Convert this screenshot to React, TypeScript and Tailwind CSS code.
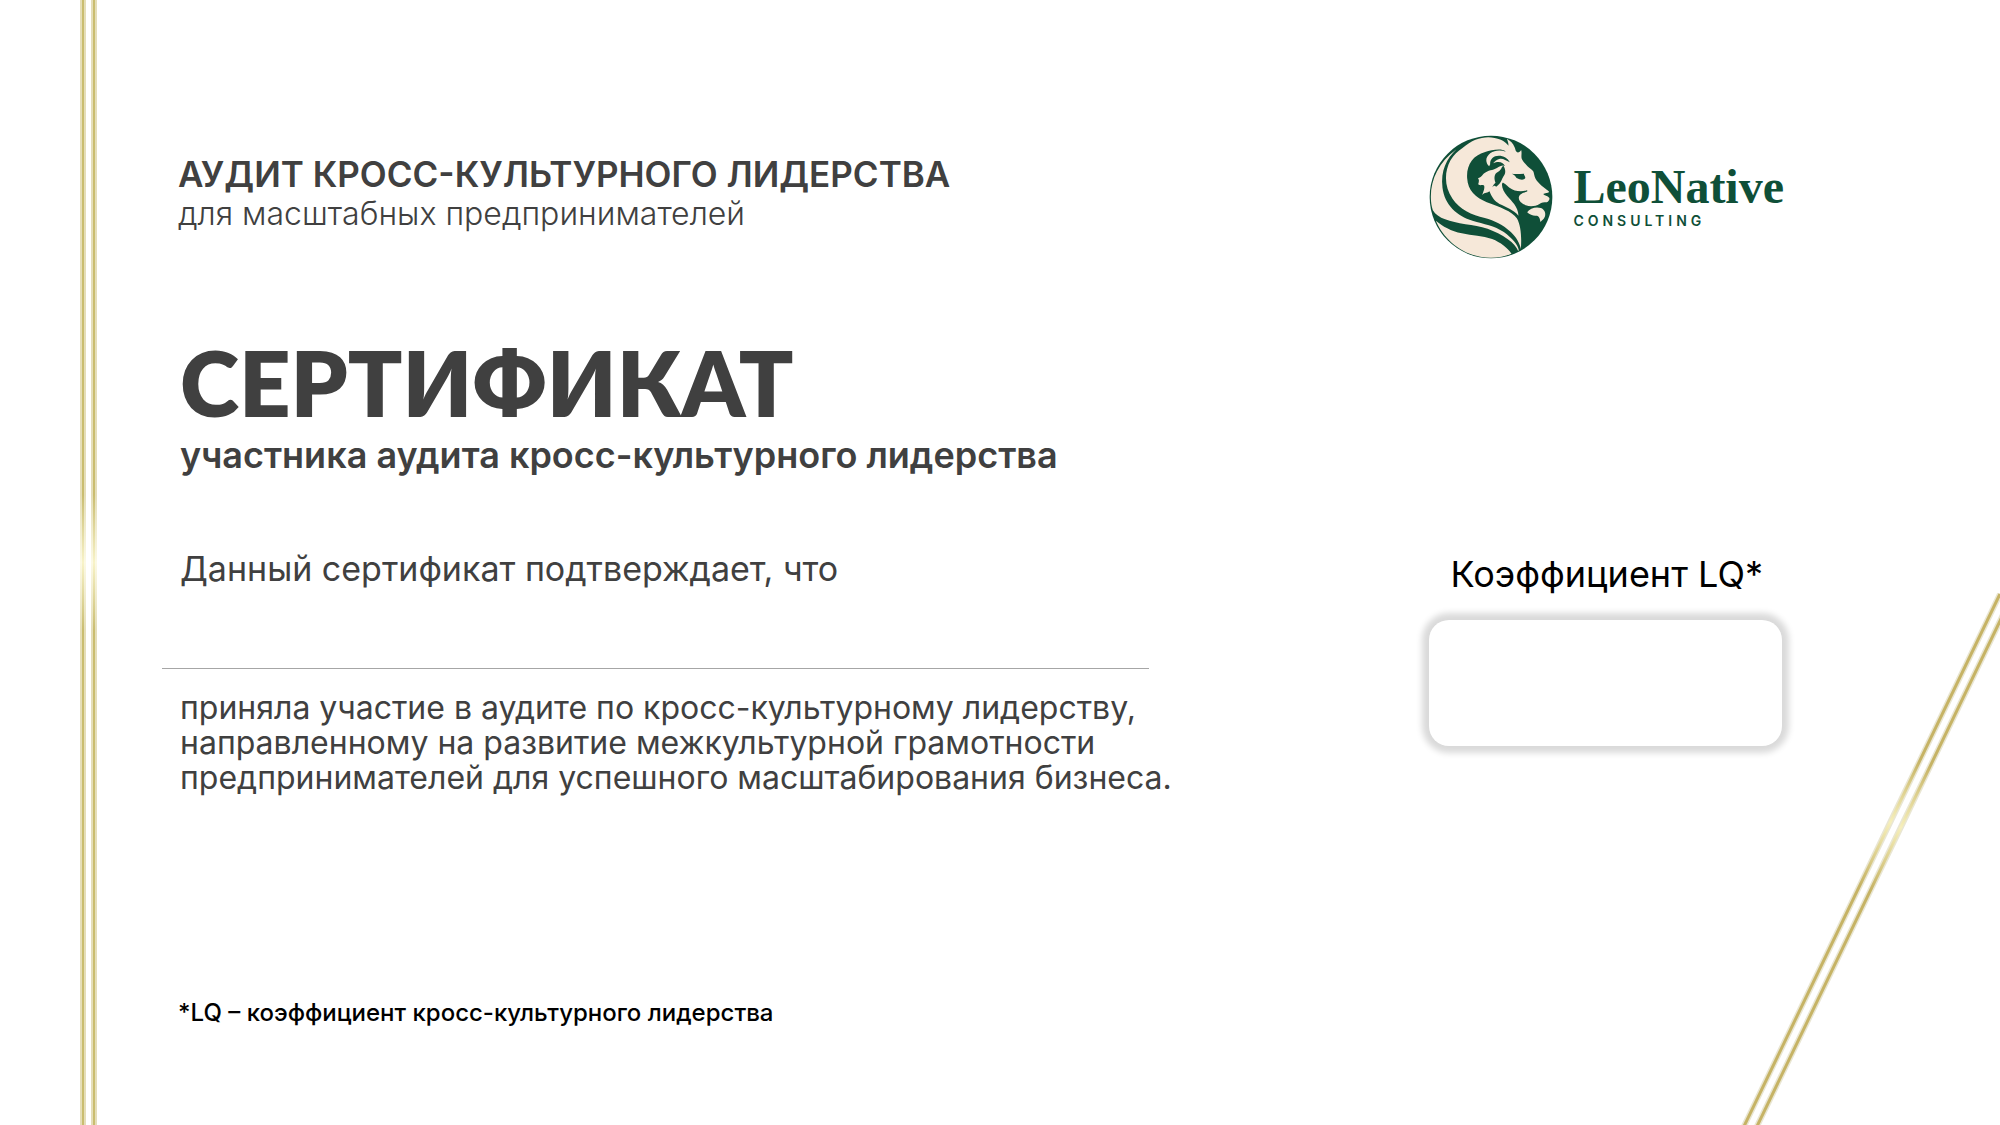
import React from "react";

function LionEmblem() {
  return (
    <svg viewBox="26 32 371 372" className="size-[124px] shrink-0" aria-hidden="true">
      <circle cx="211.5" cy="218" r="184" fill="#0f4f38" />
      <g fill="#f6e8d9">
        <path d="M108 75C55 113 31 165 31 217C31 233 33 246 37 258C52 283 88 292 135 300C180 304 225 318 262 345C278 356 288 368 293 380L295 378C292 360 275 342 250 323C222 304 190 299 156 289C110 275 72 241 66 190C60 140 78 103 108 75Z" />
        <path d="M46 289C72 349 132 400 211 400C236 400 256 396 273 388C262 371 240 354 215 344C186 335 155 334 124 327C92 320 66 306 46 289Z" />
        <path d="M126 71C165 37 205 32 241 46C252 51 258 56 264 64C264 56 262 50 259 43C270 49 278 57 282 68C286 76 284 80 290 84C295 85 299 82 302 77C305 86 301 95 304 104C308 112 315 119 321 126C328 132 335 136 339 142C341 151 343 161 349 169C357 178 366 187 375 193C380 197 385 199 386 203C382 207 373 206 368 209C371 214 382 215 386 220C389 225 384 231 379 234C370 234 363 234 357 239C346 246 329 248 316 243C304 238 294 230 295 219C297 210 306 206 316 203C321 202 322 200 319 198C300 204 281 200 267 190C257 182 252 175 246 175C241 185 249 202 260 215C274 232 292 245 294 274C279 256 256 248 237 239C223 231 214 220 207 201C201 207 194 203 185 212C189 200 193 192 191 184C186 180 179 185 173 180C177 169 175 164 172 162C184 160 185 149 196 144C207 136 222 138 234 128C240 125 248 121 253 125C250 115 235 108 218 117C222 111 228 106 236 104C247 101 255 108 268 114C262 101 249 94 235 94C218 94 208 105 209 120L206 126C193 114 195 97 210 86C221 78 241 76 256 82C242 70 213 78 194 83C156 93 137 124 140 162C142 198 165 220 199 234C238 248 274 261 289 282C301 302 304 340 301 374C298 357 287 338 271 323C247 301 222 289 193 281C154 272 117 255 96 223C72 188 70 145 90 108C100 91 112 81 126 71Z" />
        <path d="M320 264C328 252 346 246 361 251C372 255 377 267 373 277C370 285 364 287 360 293C358 281 356 276 349 274C340 276 328 271 320 264Z" />
      </g>
      <g fill="#0f4f38">
        <path d="M249 124C242 127 244 136 233 142C219 148 221 164 225 175C219 180 218 184 215 189C220 183 222 183 227 187C241 179 243 165 251 153C257 143 254 133 249 124Z" />
        <path d="M274 148C285 151 299 148 311 148C308 151 316 155 314 162C311 168 298 167 290 162C285 159 287 154 274 148Z" />
      </g>
    </svg>
  );
}

function Logo() {
  return (
    <div className="flex items-center gap-5 text-[#0f4f38]">
      <LionEmblem />
      <div>
        <p className="font-['Liberation_Serif',serif] text-[48px] leading-[48px] font-bold">LeoNative</p>
        <p className="font-[Inter,sans-serif] text-[14px] leading-5 font-semibold tracking-[4px]">CONSULTING</p>
      </div>
    </div>
  );
}

function GoldBar() {
  return (
    <div className="flex w-[6px] bg-linear-to-b from-[#cabd70] from-44% via-[#f8f3c8] via-50% to-[#cabd70] to-56%">
      <div className="w-[2px] bg-white/50" />
      <div className="w-[2px]" />
      <div className="w-[2px] bg-white/50" />
    </div>
  );
}

function DiagonalLines() {
  const lines = ["M-5 541L260 -10", "M8 541L273 -10"];
  return (
    <svg
      viewBox="0 0 260 535"
      className="pointer-events-none absolute right-0 bottom-0 h-[535px] w-[260px]"
      fill="none"
      aria-hidden="true"
    >
      <defs>
        <linearGradient id="gold" gradientUnits="userSpaceOnUse" x1="83" y1="340" x2="203" y2="90">
          <stop offset="0.25" stopColor="#c6b365" />
          <stop offset="0.5" stopColor="#f6efbb" />
          <stop offset="0.75" stopColor="#c6b365" />
        </linearGradient>
      </defs>
      {lines.map((d) => (
        <g key={d} transform="translate(0 14)">
          <path d={d} stroke="#e9e6d2" strokeWidth="6" />
          <path d={d} stroke="url(#gold)" strokeWidth="3" />
        </g>
      ))}
    </svg>
  );
}

export default function App() {
  return (
    <div className="relative flex min-h-screen overflow-hidden bg-white pl-20 font-[Inter,sans-serif] text-[#404040]">
      <div className="flex shrink-0 gap-[5px]" aria-hidden="true">
        <GoldBar />
        <GoldBar />
      </div>
      <DiagonalLines />
      <main className="flex grow justify-between pr-[216px] pl-[65px]">
        <section className="w-[1020px] pt-[154px]">
          <header className="pl-4">
            <p className="text-[35px] leading-10 font-semibold">АУДИТ КРОСС-КУЛЬТУРНОГО ЛИДЕРСТВА</p>
            <p className="text-[32px] leading-10 font-light">для масштабных предпринимателей</p>
          </header>
          <div className="pt-24 pl-[18px]">
            <h1 className="font-[Lato,sans-serif] text-[90px] leading-[105px] font-extrabold">СЕРТИФИКАТ</h1>
            <h2 className="text-[36px] leading-10 font-semibold">участника аудита кросс-культурного лидерства</h2>
          </div>
          <p className="pt-[74px] pl-[18px] text-[34px] leading-10">Данный сертификат подтверждает, что</p>
          <hr className="mt-[79px] w-[987px] border-[#a6a6a6]" />
          <p className="pt-[21px] pl-[18px] text-[32px] leading-[35px] whitespace-nowrap">
            приняла участие в аудите по кросс-культурному лидерству,
            <br />
            направленному на развитие межкультурной грамотности
            <br />
            предпринимателей для успешного масштабирования бизнеса.
          </p>
          <footer className="pt-[202px] pl-4">
            <p className="text-[24px] leading-8 font-medium text-black">*LQ – коэффициент кросс-культурного лидерства</p>
          </footer>
        </section>
        <aside className="flex flex-col pt-[135px]">
          <Logo />
          <label htmlFor="lq" className="pt-[295px] text-center text-[36px] leading-10 text-black">
            Коэффициент LQ*
          </label>
          <input
            id="lq"
            type="text"
            readOnly
            className="mt-[26px] h-[126px] w-[353px] rounded-[20px] bg-white text-center text-[48px] shadow-[0_0_6px_7px_#dadada] outline-none"
          />
        </aside>
      </main>
    </div>
  );
}
